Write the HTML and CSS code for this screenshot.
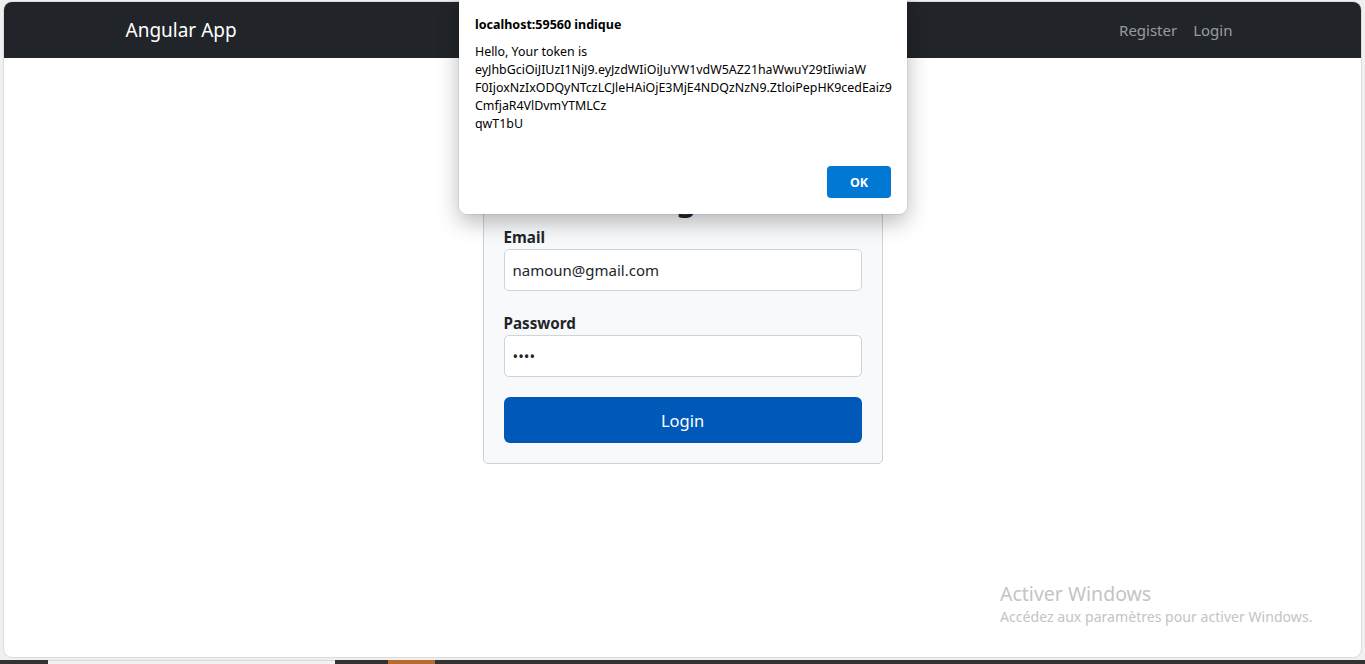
FILE: index.html
```html
<!DOCTYPE html>
<html lang="fr">
<head>
<meta charset="utf-8">
<title>Angular App</title>
<link rel="stylesheet" href="styles.css">
</head>
<body>
<div class="window">
  <nav class="navbar">
    <div class="container nav-inner">
      <a class="brand" href="#">Angular App</a>
      <ul class="nav-links">
        <li><a href="#">Register</a></li>
        <li><a href="#">Login</a></li>
      </ul>
    </div>
  </nav>
  <main class="main">
    <form class="card">
      <h2 class="card-title">Login</h2>
      <div class="field">
        <label class="label" for="email">Email</label>
        <input class="input" id="email" type="email" value="namoun@gmail.com">
      </div>
      <div class="field">
        <label class="label" for="password">Password</label>
        <input class="input" id="password" type="password" value="1234">
      </div>
      <button class="btn-login" type="button">Login</button>
    </form>
  </main>
  <div class="watermark">
    <div class="wm-title">Activer Windows</div>
    <div class="wm-sub">Accédez aux paramètres pour activer Windows.</div>
  </div>
</div>
<div class="taskbar">
  <span class="tb-dark tb-a"></span>
  <span class="tb-light"></span>
  <span class="tb-dark tb-b"></span>
  <span class="tb-orange"></span>
  <span class="tb-dark tb-rest"></span>
</div>

<div class="dialog" role="alertdialog">
  <div class="dialog-title">localhost:59560 indique</div>
  <div class="dialog-body">
    <div class="line">Hello, Your token is</div>
    <div class="line">eyJhbGciOiJIUzI1NiJ9.eyJzdWIiOiJuYW1vdW5AZ21haWwuY29tIiwiaW</div>
    <div class="line">F0IjoxNzIxODQyNTczLCJleHAiOjE3MjE4NDQzNzN9.ZtloiPepHK9cedEaiz9</div>
    <div class="line">CmfjaR4VlDvmYTMLCz</div>
    <div class="line">qwT1bU</div>
  </div>
  <div class="dialog-actions">
    <button class="btn-ok" type="button">OK</button>
  </div>
</div>
</body>
</html>
```

FILE: styles.css
```css
* { box-sizing: border-box; }

html, body {
  margin: 0;
  padding: 0;
  height: 664px;
  overflow: hidden;
}

body {
  background: #f0f0f0;
  font-family: "Noto Sans", "Open Sans", sans-serif;
  color: #212529;
  display: flex;
  flex-direction: column;
  position: relative;
}

.window {
  position: relative;
  margin: 2px 4px 0 4px;
  width: 1357px;
  height: 655px;
  background: #fff;
  border-radius: 8px;
  overflow: hidden;
  box-shadow: 0 0 0 1px #dcdcdc;
}

.navbar {
  background: #212529;
  height: 56px;
}

.container {
  width: 1140px;
  margin: 0 auto;
  padding: 0 12px;
}

.nav-inner {
  height: 100%;
  display: flex;
  align-items: center;
  justify-content: space-between;
}

.brand {
  color: #fff;
  text-decoration: none;
  font-size: 19px;
  line-height: 30px;
  margin-left: 1px;
}

.nav-links {
  list-style: none;
  margin: 0;
  padding: 0;
  display: flex;
}

.nav-links a {
  display: block;
  padding: 8px;
  color: rgba(255, 255, 255, 0.55);
  text-decoration: none;
  font-size: 15px;
  line-height: 24px;
}

.main {
  display: flex;
  justify-content: center;
  padding-top: 101px;
}

.card {
  width: 400px;
  background: #f8f9fa;
  border: 1px solid #cfd0d2;
  border-radius: 5px;
  padding: 20px;
  margin: 0;
}

.card-title {
  margin: 0 0 7px;
  text-align: center;
  font-size: 31px;
  line-height: 38px;
  font-weight: 700;
}

.field {
  margin-bottom: 20px;
}

.label {
  display: block;
  font-weight: 700;
  font-size: 15.2px;
  line-height: 24px;
}

.input {
  display: block;
  width: 100%;
  height: 42px;
  padding: 8px 8px;
  font-family: inherit;
  font-size: 15px;
  line-height: 24px;
  color: #212529;
  background: #fff;
  border: 1px solid #ced4da;
  border-radius: 5px;
  outline: none;
}

.btn-login {
  display: block;
  width: 100%;
  height: 46px;
  border: none;
  border-radius: 6px;
  background: #0059b8;
  color: #fff;
  font-family: inherit;
  font-size: 16.5px;
}

.watermark {
  position: absolute;
  left: 996px;
  top: 579px;
  color: #c4c4c4;
  pointer-events: none;
}

.wm-title {
  font-size: 19.5px;
  line-height: 26px;
}

.wm-sub {
  font-size: 14.1px;
  line-height: 20px;
}

.taskbar {
  margin-top: 3px;
  height: 4px;
  display: flex;
}

.tb-dark { background: #333333; height: 100%; }
.tb-a { width: 48px; }
.tb-light { width: 287px; background: #f2f2f2; border-top: 1px solid #d8d8d8; }
.tb-b { width: 53px; }
.tb-orange { width: 47px; background: #b86b2c; }
.tb-rest { flex: 1; }

.dialog {
  position: absolute;
  left: 459px;
  top: -8px;
  width: 448px;
  padding: 24px 16px 16px;
  background: #fff;
  border-radius: 8px;
  box-shadow: 0 8px 22px rgba(0, 0, 0, 0.28), 0 0 0 1px rgba(0, 0, 0, 0.06);
  font-family: "Noto Sans", "Open Sans", sans-serif;
  color: #000;
}

.dialog-title {
  font-size: 12.5px;
  font-weight: 700;
  line-height: 18px;
  margin-bottom: 9px;
}

.dialog-body {
  font-size: 12.4px;
  line-height: 18px;
  margin-bottom: 33px;
}

.line { white-space: nowrap; }

.dialog-actions {
  display: flex;
  justify-content: flex-end;
}

.btn-ok {
  width: 64px;
  height: 32px;
  border: none;
  border-radius: 4px;
  background: #0078d4;
  color: #fff;
  font-family: inherit;
  font-size: 12.5px;
  font-weight: 700;
}
```
